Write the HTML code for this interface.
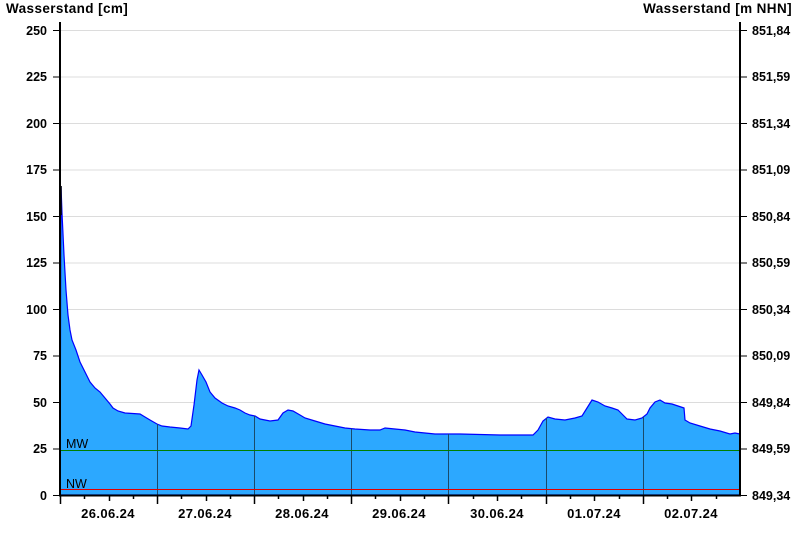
<!DOCTYPE html>
<html><head><meta charset="utf-8"><style>
html,body{margin:0;padding:0;background:#fff;}
svg{display:block;}
text{font-family:"Liberation Sans",Arial,sans-serif;font-weight:bold;font-size:12.5px;fill:#000;}
.d{font-size:13px;letter-spacing:0.4px;}
.t{font-size:13.5px;letter-spacing:0.4px;}
</style></head><body>
<svg width="800" height="550" viewBox="0 0 800 550" xmlns="http://www.w3.org/2000/svg">
<defs>
<clipPath id="c"><path d="M60,495 L61,186 L62,213 L64,255 L66,290 L68,315 L70,330 L72,340 L76,350 L80,362 L85,372 L90,382 L95,388 L100,392 L105,398 L110,404 L113,408 L118,411 L125,413 L140,414 L145,417 L150,420 L157,424 L162,426 L170,427 L180,428 L188,429 L191,426 L194,405 L197,380 L199,370 L202,375 L206,382 L210,392 L215,398 L222,403 L228,406 L235,408 L240,410 L245,413 L250,415 L255,416 L260,419 L270,421 L278,420 L283,413 L288,410 L293,411 L300,415 L305,418 L315,421 L325,424 L335,426 L345,428 L355,429 L370,430 L380,430 L385,428 L395,429 L405,430 L415,432 L425,433 L435,434 L460,434 L500,435 L533,435 L538,430 L543,421 L548,417 L555,419 L565,420 L575,418 L582,416 L587,408 L592,400 L598,402 L605,406 L612,408 L618,410 L622,414 L627,419 L635,420 L642,418 L647,414 L650,408 L655,402 L660,400 L665,403 L672,404 L678,406 L684,408 L685,420 L690,423 L700,426 L710,429 L720,431 L730,434 L735,433 L740,434 L740,495 Z"/></clipPath>
</defs>
<g stroke="#dcdcdc" stroke-width="1">
<line x1="60" y1="30.5" x2="740" y2="30.5"/><line x1="60" y1="77" x2="740" y2="77"/><line x1="60" y1="123.5" x2="740" y2="123.5"/><line x1="60" y1="170" x2="740" y2="170"/><line x1="60" y1="216.5" x2="740" y2="216.5"/><line x1="60" y1="263" x2="740" y2="263"/><line x1="60" y1="309.5" x2="740" y2="309.5"/><line x1="60" y1="356" x2="740" y2="356"/><line x1="60" y1="402.5" x2="740" y2="402.5"/>
</g>
<path d="M60,495 L61,186 L62,213 L64,255 L66,290 L68,315 L70,330 L72,340 L76,350 L80,362 L85,372 L90,382 L95,388 L100,392 L105,398 L110,404 L113,408 L118,411 L125,413 L140,414 L145,417 L150,420 L157,424 L162,426 L170,427 L180,428 L188,429 L191,426 L194,405 L197,380 L199,370 L202,375 L206,382 L210,392 L215,398 L222,403 L228,406 L235,408 L240,410 L245,413 L250,415 L255,416 L260,419 L270,421 L278,420 L283,413 L288,410 L293,411 L300,415 L305,418 L315,421 L325,424 L335,426 L345,428 L355,429 L370,430 L380,430 L385,428 L395,429 L405,430 L415,432 L425,433 L435,434 L460,434 L500,435 L533,435 L538,430 L543,421 L548,417 L555,419 L565,420 L575,418 L582,416 L587,408 L592,400 L598,402 L605,406 L612,408 L618,410 L622,414 L627,419 L635,420 L642,418 L647,414 L650,408 L655,402 L660,400 L665,403 L672,404 L678,406 L684,408 L685,420 L690,423 L700,426 L710,429 L720,431 L730,434 L735,433 L740,434 L740,495 Z" fill="#2ca8ff" stroke="#0000ff" stroke-width="1.2"/>
<g clip-path="url(#c)" stroke="#1a4a6a" stroke-width="1">
<line x1="157.5" y1="30" x2="157.5" y2="495"/><line x1="254.5" y1="30" x2="254.5" y2="495"/><line x1="351.5" y1="30" x2="351.5" y2="495"/><line x1="448.5" y1="30" x2="448.5" y2="495"/><line x1="546.5" y1="30" x2="546.5" y2="495"/><line x1="643.5" y1="30" x2="643.5" y2="495"/>
</g>
<line x1="60" y1="450.5" x2="740" y2="450.5" stroke="#008000"/>
<line x1="60" y1="489.5" x2="740" y2="489.5" stroke="#e00000"/>
<text x="66" y="448" style="font-weight:normal">MW</text>
<text x="66" y="488" style="font-weight:normal">NW</text>
<line x1="61" y1="186" x2="61" y2="215" stroke="#000" stroke-width="1.5"/>
<g stroke="#000" stroke-width="2">
<line x1="60" y1="22" x2="60" y2="496"/><line x1="740" y1="22" x2="740" y2="496"/><line x1="59" y1="495.5" x2="741" y2="495.5"/>
</g>
<g stroke="#000" stroke-width="1">
<line x1="53" y1="30.5" x2="60" y2="30.5"/><line x1="53" y1="77" x2="60" y2="77"/><line x1="53" y1="123.5" x2="60" y2="123.5"/><line x1="53" y1="170" x2="60" y2="170"/><line x1="53" y1="216.5" x2="60" y2="216.5"/><line x1="53" y1="263" x2="60" y2="263"/><line x1="53" y1="309.5" x2="60" y2="309.5"/><line x1="53" y1="356" x2="60" y2="356"/><line x1="53" y1="402.5" x2="60" y2="402.5"/><line x1="53" y1="449" x2="60" y2="449"/><line x1="53" y1="495.5" x2="60" y2="495.5"/>
<line x1="740" y1="30.5" x2="747" y2="30.5"/><line x1="740" y1="77" x2="747" y2="77"/><line x1="740" y1="123.5" x2="747" y2="123.5"/><line x1="740" y1="170" x2="747" y2="170"/><line x1="740" y1="216.5" x2="747" y2="216.5"/><line x1="740" y1="263" x2="747" y2="263"/><line x1="740" y1="309.5" x2="747" y2="309.5"/><line x1="740" y1="356" x2="747" y2="356"/><line x1="740" y1="402.5" x2="747" y2="402.5"/><line x1="740" y1="449" x2="747" y2="449"/><line x1="740" y1="495.5" x2="747" y2="495.5"/>
</g>
<g stroke="#000" stroke-width="1.5">
<line x1="60.5" y1="495" x2="60.5" y2="504"/><line x1="84.5" y1="495" x2="84.5" y2="499"/><line x1="109.5" y1="495" x2="109.5" y2="501"/><line x1="133.5" y1="495" x2="133.5" y2="499"/>
<line x1="157.5" y1="495" x2="157.5" y2="504"/><line x1="181.5" y1="495" x2="181.5" y2="499"/><line x1="206.5" y1="495" x2="206.5" y2="501"/><line x1="230.5" y1="495" x2="230.5" y2="499"/>
<line x1="254.5" y1="495" x2="254.5" y2="504"/><line x1="278.5" y1="495" x2="278.5" y2="499"/><line x1="303.5" y1="495" x2="303.5" y2="501"/><line x1="327.5" y1="495" x2="327.5" y2="499"/>
<line x1="351.5" y1="495" x2="351.5" y2="504"/><line x1="375.5" y1="495" x2="375.5" y2="499"/><line x1="400.5" y1="495" x2="400.5" y2="501"/><line x1="424.5" y1="495" x2="424.5" y2="499"/>
<line x1="448.5" y1="495" x2="448.5" y2="504"/><line x1="473.5" y1="495" x2="473.5" y2="499"/><line x1="497.5" y1="495" x2="497.5" y2="501"/><line x1="521.5" y1="495" x2="521.5" y2="499"/>
<line x1="546.5" y1="495" x2="546.5" y2="504"/><line x1="570.5" y1="495" x2="570.5" y2="499"/><line x1="594.5" y1="495" x2="594.5" y2="501"/><line x1="619.5" y1="495" x2="619.5" y2="499"/>
<line x1="643.5" y1="495" x2="643.5" y2="504"/><line x1="667.5" y1="495" x2="667.5" y2="499"/><line x1="691.5" y1="495" x2="691.5" y2="501"/><line x1="716.5" y1="495" x2="716.5" y2="499"/>
</g>
<text x="6" y="13" class="t">Wasserstand [cm]</text>
<text x="792" y="13" text-anchor="end" class="t">Wasserstand [m NHN]</text>
<g text-anchor="end">
<text x="47" y="35">250</text><text x="47" y="81">225</text><text x="47" y="128">200</text><text x="47" y="174">175</text><text x="47" y="221">150</text><text x="47" y="267">125</text><text x="47" y="314">100</text><text x="47" y="360">75</text><text x="47" y="407">50</text><text x="47" y="453">25</text><text x="47" y="500">0</text>
</g>
<g>
<text x="752" y="35">851,84</text><text x="752" y="81">851,59</text><text x="752" y="128">851,34</text><text x="752" y="174">851,09</text><text x="752" y="221">850,84</text><text x="752" y="267">850,59</text><text x="752" y="314">850,34</text><text x="752" y="360">850,09</text><text x="752" y="407">849,84</text><text x="752" y="453">849,59</text><text x="752" y="500">849,34</text>
</g>
<g text-anchor="middle" class="d">
<text x="108" y="518" class="d">26.06.24</text><text x="205" y="518" class="d">27.06.24</text><text x="302" y="518" class="d">28.06.24</text><text x="399" y="518" class="d">29.06.24</text><text x="497" y="518" class="d">30.06.24</text><text x="594" y="518" class="d">01.07.24</text><text x="691" y="518" class="d">02.07.24</text>
</g>
</svg>
</body></html>
